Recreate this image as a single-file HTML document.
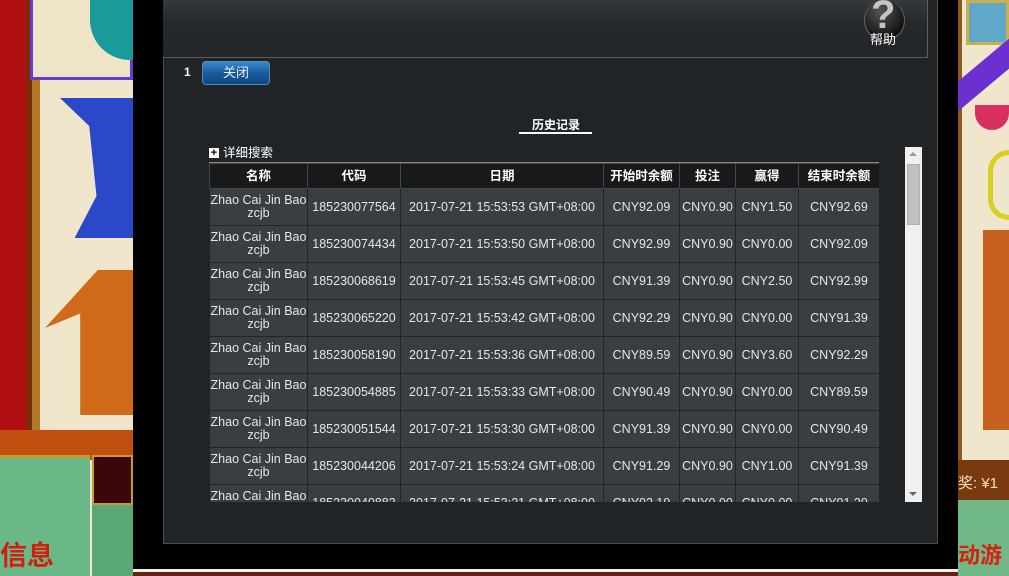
<!DOCTYPE html>
<html><head><meta charset="utf-8"><style>
*{margin:0;padding:0;box-sizing:border-box}
body{width:1009px;height:576px;overflow:hidden;position:relative;background:#000;font-family:"Liberation Sans","Noto Sans CJK SC",sans-serif}
.abs{position:absolute}
#left{left:0;top:0;width:133px;height:576px;background:#efe6cc}
#right{left:958px;top:0;width:51px;height:576px;background:#efe6cc}
#panel{left:163px;top:0;width:775px;height:544px;background:#212427;border:1px solid #4a4d50;border-top:none}
#top{left:163px;top:0;width:765px;height:58px;background:linear-gradient(#36393c,#26292c 40%,#232629);border:1px solid #5c5f62;border-top:none;border-left:none}
table{border-collapse:collapse;font-size:12.5px;color:#e6e6e6;table-layout:fixed}
td,th{border:1px solid #222528;text-align:center;line-height:13px}
th{background:#17191b;color:#fff;font-weight:bold;height:25px;font-size:12.5px;border-color:#44474a}
td{background:#3b3e41;height:37px}
</style></head><body>
<div id="left" class="abs">
 <div class="abs" style="left:0;top:0;width:30px;height:430px;background:#b01010"></div>
 <div class="abs" style="left:26px;top:0;width:6px;height:430px;background:#7a2a05"></div>
 <div class="abs" style="left:32px;top:0;width:8px;height:430px;background:#b07828"></div>
 <div class="abs" style="left:30px;top:0;width:103px;height:80px;border:3px solid #6a3ad0;border-top:none;background:#eee4c6"></div>
 <div class="abs" style="left:90px;top:0;width:43px;height:60px;background:#1a9a9a;border-radius:0 0 0 40px"></div>
 <div class="abs" style="left:60px;top:98px;width:73px;height:140px;background:#2a48c8;clip-path:polygon(0 0,100% 0,100% 100%,20% 100%,50% 70%,40% 20%)"></div>
 <div class="abs" style="left:45px;top:270px;width:88px;height:145px;background:#d06a18;clip-path:polygon(0 40%,60% 0,100% 0,100% 100%,40% 100%,40% 30%)"></div>
 <div class="abs" style="left:0;top:430px;width:133px;height:30px;background:#c05010"></div>
 <div class="abs" style="left:0;top:455px;width:90px;height:121px;background:#6ab888;border-top:3px solid #c89a30"></div>
 <div class="abs" style="left:92px;top:455px;width:41px;height:50px;background:#3a0808;border:2px solid #c89a30"></div>
 <div class="abs" style="left:92px;top:505px;width:41px;height:71px;background:#5aa878"></div>
 <div class="abs" style="left:0;top:534px;color:#d02010;font-size:27px;font-weight:bold">信息</div>
</div>
<div id="right" class="abs">
 <div class="abs" style="left:0;top:0;width:4px;height:460px;background:#8a5a20"></div>
 <div class="abs" style="left:8px;top:0;width:43px;height:45px;background:#60a8c8;border:3px solid #c8b050"></div>
 <div class="abs" style="left:0;top:60px;width:51px;height:30px;background:#6a30d0;transform:skewY(-40deg)"></div>
 <div class="abs" style="left:17px;top:105px;width:34px;height:25px;background:#d83060;border-radius:0 0 20px 20px"></div>
 <div class="abs" style="left:30px;top:150px;width:21px;height:70px;border:5px solid #d8d020;border-right:none;border-radius:40px 0 0 40px"></div>
 <div class="abs" style="left:25px;top:230px;width:26px;height:200px;background:#c86020"></div>
 <div class="abs" style="left:0;top:460px;width:51px;height:40px;background:#7a3a10;color:#f0e0c0;font-size:15px;padding-top:12px">奖: ¥1</div>
 <div class="abs" style="left:0;top:500px;width:51px;height:76px;background:#70b888"></div>
 <div class="abs" style="left:0;top:538px;color:#d82010;font-size:22px;font-weight:bold">动游</div>
</div>
<div class="abs" style="left:133px;top:569px;width:825px;height:3px;background:#f0f0f0"></div>
<div class="abs" style="left:133px;top:572px;width:825px;height:4px;background:#6a2010"></div>
<div id="panel" class="abs"></div>
<div id="top" class="abs"></div>
<div class="abs" style="left:864px;top:0;width:41px;height:41px;border-radius:50%;background:radial-gradient(circle at 40% 30%,#555,#111 70%);border:1px solid #666;border-top:none"></div>
<div class="abs" style="left:871px;top:-8px;color:#c4c4c4;font-size:40px;font-weight:bold;line-height:46px">?</div>
<div class="abs" style="left:870px;top:29px;color:#fff;font-size:13px">帮助</div>
<div class="abs" style="left:184px;top:65px;color:#fff;font-size:12px;font-weight:bold">1</div>
<div class="abs" style="left:202px;top:61px;width:68px;height:24px;border-radius:4px;background:linear-gradient(#3a8ad0,#1a5a9a 50%,#0a4a88);border:1px solid #5a8ab0;color:#e8f0ff;font-size:13px;text-align:center;line-height:22px">关闭</div>
<div class="abs" style="left:520px;top:116px;width:72px;color:#fff;font-size:12px;font-weight:bold;text-align:center">历史记录</div>
<div class="abs" style="left:519px;top:132px;width:73px;height:2px;background:#fff"></div>
<div class="abs" style="left:209px;top:148px;width:10px;height:10px;background:#fff;color:#000;font-size:11px;line-height:10px;text-align:center;font-weight:bold">+</div>
<div class="abs" style="left:223px;top:145px;color:#fff;font-size:12.5px;line-height:16px">详细搜索</div>
<div class="abs" style="left:209px;top:162px;width:670px;height:340px;overflow:hidden;border-top:1px solid #888">
<table style="width:670px">
<colgroup><col style="width:98px"><col style="width:93px"><col style="width:203px"><col style="width:76px"><col style="width:56px"><col style="width:63px"><col style="width:81px"></colgroup>
<tr><th>名称</th><th>代码</th><th>日期</th><th>开始时余额</th><th>投注</th><th>赢得</th><th>结束时余额</th></tr>
<tr><td>Zhao Cai Jin Bao<br>zcjb</td><td>185230077564</td><td>2017-07-21 15:53:53 GMT+08:00</td><td>CNY92.09</td><td>CNY0.90</td><td>CNY1.50</td><td>CNY92.69</td></tr>
<tr><td>Zhao Cai Jin Bao<br>zcjb</td><td>185230074434</td><td>2017-07-21 15:53:50 GMT+08:00</td><td>CNY92.99</td><td>CNY0.90</td><td>CNY0.00</td><td>CNY92.09</td></tr>
<tr><td>Zhao Cai Jin Bao<br>zcjb</td><td>185230068619</td><td>2017-07-21 15:53:45 GMT+08:00</td><td>CNY91.39</td><td>CNY0.90</td><td>CNY2.50</td><td>CNY92.99</td></tr>
<tr><td>Zhao Cai Jin Bao<br>zcjb</td><td>185230065220</td><td>2017-07-21 15:53:42 GMT+08:00</td><td>CNY92.29</td><td>CNY0.90</td><td>CNY0.00</td><td>CNY91.39</td></tr>
<tr><td>Zhao Cai Jin Bao<br>zcjb</td><td>185230058190</td><td>2017-07-21 15:53:36 GMT+08:00</td><td>CNY89.59</td><td>CNY0.90</td><td>CNY3.60</td><td>CNY92.29</td></tr>
<tr><td>Zhao Cai Jin Bao<br>zcjb</td><td>185230054885</td><td>2017-07-21 15:53:33 GMT+08:00</td><td>CNY90.49</td><td>CNY0.90</td><td>CNY0.00</td><td>CNY89.59</td></tr>
<tr><td>Zhao Cai Jin Bao<br>zcjb</td><td>185230051544</td><td>2017-07-21 15:53:30 GMT+08:00</td><td>CNY91.39</td><td>CNY0.90</td><td>CNY0.00</td><td>CNY90.49</td></tr>
<tr><td>Zhao Cai Jin Bao<br>zcjb</td><td>185230044206</td><td>2017-07-21 15:53:24 GMT+08:00</td><td>CNY91.29</td><td>CNY0.90</td><td>CNY1.00</td><td>CNY91.39</td></tr>
<tr><td>Zhao Cai Jin Bao<br>zcjb</td><td>185230040883</td><td>2017-07-21 15:53:21 GMT+08:00</td><td>CNY92.19</td><td>CNY0.90</td><td>CNY0.00</td><td>CNY91.29</td></tr>
</table></div>
<div class="abs" style="left:905px;top:147px;width:17px;height:355px;background:#f0f0f0"></div>
<div class="abs" style="left:909px;top:152px;width:0;height:0;border-left:4px solid transparent;border-right:4px solid transparent;border-bottom:4px solid #999"></div>
<div class="abs" style="left:907px;top:164px;width:13px;height:61px;background:#c0c0c0;border:1px solid #b0b0b0"></div>
<div class="abs" style="left:909px;top:492px;width:0;height:0;border-left:4px solid transparent;border-right:4px solid transparent;border-top:4px solid #666"></div>
</body></html>
